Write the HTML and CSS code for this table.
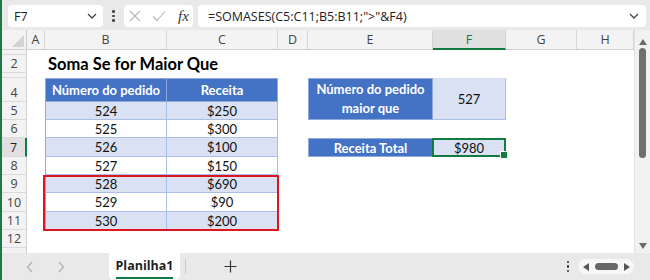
FILE: index.html
```html
<!DOCTYPE html>
<html lang="pt">
<head>
<meta charset="utf-8">
<title>Soma Se for Maior Que</title>
<link rel="stylesheet" href="styles.css">
</head>
<body>
<div class="app">
  <div class="toolbar">
    <div class="namebox">
      <span class="namebox-text">F7</span>
      <svg class="chev" width="10" height="6" viewBox="0 0 10 6"><path d="M1 1 L5 5 L9 1" fill="none" stroke="#444" stroke-width="1.3"/></svg>
    </div>
    <div class="kebab"><i></i><i></i><i></i></div>
    <div class="fxbox">
      <svg width="12" height="12" viewBox="0 0 12 12"><path d="M1 1 L11 11 M11 1 L1 11" stroke="#b5b5b5" stroke-width="1.1" fill="none"/></svg>
      <svg width="14" height="12" viewBox="0 0 14 12"><path d="M1 6.5 L5 10.5 L13 1.5" stroke="#b5b5b5" stroke-width="1.1" fill="none"/></svg>
      <span class="fx">fx</span>
    </div>
    <div class="formula">
      <span class="formula-text">=SOMASES(C5:C11;B5:B11;"&gt;"&amp;F4)</span>
      <svg class="chev" width="10" height="6" viewBox="0 0 10 6"><path d="M1 1 L5 5 L9 1" fill="none" stroke="#444" stroke-width="1.3"/></svg>
    </div>
  </div>

  <div class="main">
    <div class="sheet">
      <!-- column headers -->
      <div class="corner"><svg width="12" height="12" viewBox="0 0 12 12"><polygon points="12,0 12,12 0,12" fill="#d4d4d4"/></svg></div>
      <div class="colhdr">A</div>
      <div class="colhdr">B</div>
      <div class="colhdr">C</div>
      <div class="colhdr">D</div>
      <div class="colhdr">E</div>
      <div class="colhdr sel">F</div>
      <div class="colhdr">G</div>
      <div class="colhdr">H</div>

      <!-- row headers -->
      <div class="rowhdr r1"></div>
      <div class="rowhdr r2">2</div>
      <div class="rowhdr r3"></div>
      <div class="rowhdr r4">4</div>
      <div class="rowhdr r5">5</div>
      <div class="rowhdr r6">6</div>
      <div class="rowhdr r7 sel">7</div>
      <div class="rowhdr r8">8</div>
      <div class="rowhdr r9">9</div>
      <div class="rowhdr r10">10</div>
      <div class="rowhdr r11">11</div>
      <div class="rowhdr r12">12</div>
      <div class="rowhdr r13"></div>

      <!-- title -->
      <div class="title">Soma Se for Maior Que</div>

      <!-- left table -->
      <div class="cell th cB r4 first">Número do pedido</div>
      <div class="cell th cC r4">Receita</div>

      <div class="cell td alt cB r5 first">524</div><div class="cell td alt cC r5">$250</div>
      <div class="cell td cB r6 first">525</div><div class="cell td cC r6">$300</div>
      <div class="cell td alt cB r7 first">526</div><div class="cell td alt cC r7">$100</div>
      <div class="cell td cB r8 first">527</div><div class="cell td cC r8">$150</div>
      <div class="cell td alt cB r9 first">528</div><div class="cell td alt cC r9">$690</div>
      <div class="cell td cB r10 first">529</div><div class="cell td cC r10">$90</div>
      <div class="cell td alt cB r11 first">530</div><div class="cell td alt cC r11">$200</div>

      <!-- right table -->
      <div class="cell th wrap cE r45 first">Número do pedido<br>maior que</div>
      <div class="cell td alt cF r45">527</div>
      <div class="cell th cE r7 first top">Receita Total</div>
      <div class="cell td alt cF r7 top">$980</div>

      <!-- overlays -->
      <div class="redbox"></div>
      <div class="selection"></div>
    </div>
    <div class="vscroll">
      <svg class="vs-up" width="8" height="6" viewBox="0 0 8 6"><polygon points="4,0 8,6 0,6" fill="#6b6b6b"/></svg>
      <div class="vs-thumb"></div>
      <svg class="vs-down" width="8" height="6" viewBox="0 0 8 6"><polygon points="0,0 8,0 4,6" fill="#6b6b6b"/></svg>
    </div>
  </div>

  <div class="tabbar">
    <div class="tabnav">
      <svg width="8" height="12" viewBox="0 0 8 12"><path d="M6 1 L1.5 6 L6 11" fill="none" stroke="#b0b0b0" stroke-width="1.2"/></svg>
      <svg width="8" height="12" viewBox="0 0 8 12"><path d="M2 1 L6.5 6 L2 11" fill="none" stroke="#b0b0b0" stroke-width="1.2"/></svg>
    </div>
    <div class="tab"><span class="tab-label">Planilha1</span></div>
    <div class="tabsep"></div>
    <div class="addsheet">
      <svg width="13" height="13" viewBox="0 0 13 13"><path d="M6.5 0.5 V12.5 M0.5 6.5 H12.5" stroke="#333" stroke-width="1.2"/></svg>
    </div>
    <div class="spacer"></div>
    <div class="kebab small"><i></i><i></i><i></i></div>
    <div class="hscroll">
      <svg width="6" height="8" viewBox="0 0 6 8"><polygon points="0,4 6,0 6,8" fill="#555"/></svg>
      <div class="hs-thumb"></div>
      <svg width="6" height="8" viewBox="0 0 6 8"><polygon points="0,0 6,4 0,8" fill="#555"/></svg>
    </div>
  </div>
</div>
</body>
</html>
```

FILE: styles.css
```css
* { box-sizing: border-box; }

html, body {
  margin: 0;
  padding: 0;
  background: #ffffff;
}

.app {
  width: 650px;
  height: 280px;
  overflow: hidden;
  border-left: 2px solid #1d7a45;
  display: flex;
  flex-direction: column;
  font-family: "Open Sans", "Noto Sans", sans-serif;
}

/* ---------- toolbar ---------- */
.toolbar {
  height: 30px;
  flex: none;
  background: #e9e9e9;
  display: flex;
  align-items: flex-start;
  padding: 5px 4px 0 6px;
}

.namebox {
  width: 95px;
  height: 22px;
  background: #fff;
  border-radius: 4px;
  display: flex;
  align-items: center;
  justify-content: space-between;
  padding: 0 6px 0 6px;
}

.namebox-text {
  font-size: 12.5px;
  color: #222;
}

.kebab {
  width: 21px;
  height: 22px;
  display: flex;
  flex-direction: column;
  align-items: center;
  justify-content: center;
  gap: 2px;
}

.kebab i {
  display: block;
  width: 2.5px;
  height: 2.5px;
  border-radius: 50%;
  background: #444;
}

.fxbox {
  width: 69px;
  height: 22px;
  background: #fff;
  border-radius: 4px;
  display: flex;
  align-items: center;
  gap: 11px;
  padding-left: 5px;
}

.fx {
  font-family: "Liberation Serif", "DejaVu Serif", serif;
  font-style: italic;
  font-size: 15px;
  color: #333;
  margin-left: 1px;
}

.formula {
  flex: 1;
  margin-left: 5px;
  height: 22px;
  background: #fff;
  border-radius: 4px;
  display: flex;
  align-items: center;
  justify-content: space-between;
  padding: 0 7px 0 10px;
}

.formula-text {
  font-size: 12.5px;
  color: #222;
}

/* ---------- sheet ---------- */
.main {
  flex: 1;
  display: flex;
  min-height: 0;
}

.sheet {
  width: 632px;
  display: grid;
  grid-template-columns: 25px 18px 122px 111px 30px 125px 73px 71px 57px;
  grid-template-rows: 20px 5px 18px 5px 24px 18px 18px 19px 18px 18px 19px 18px 18px 5px;
  background: #fff;
  font-family: "Lato", "Liberation Sans", sans-serif;
}

.corner {
  grid-column: 1;
  grid-row: 1;
  background: #f3f3f3;
  border-right: 1px solid #cfcfcf;
  border-bottom: 1px solid #cfcfcf;
  display: flex;
  align-items: flex-end;
  justify-content: flex-end;
  padding: 0 2px 2px 0;
}

.colhdr {
  grid-row: 1;
  background: #f3f3f3;
  border-right: 1px solid #d6d6d6;
  border-bottom: 1px solid #cfcfcf;
  font-family: "Open Sans", "Noto Sans", sans-serif;
  font-size: 12.5px;
  color: #444;
  display: flex;
  align-items: center;
  justify-content: center;
}

.colhdr.sel {
  background: #e0e0e0;
  color: #107c41;
  border-bottom: 2px solid #107c41;
}

.rowhdr {
  grid-column: 1;
  background: #f3f3f3;
  border-right: 1px solid #cfcfcf;
  border-bottom: 1px solid #dadada;
  font-family: "Open Sans", "Noto Sans", sans-serif;
  font-size: 12.5px;
  line-height: 15px;
  color: #444;
  display: flex;
  align-items: flex-end;
  justify-content: center;
  padding-bottom: 1px;
}

.rowhdr.sel {
  background: #e0e0e0;
  border-right: 2px solid #107c41;
  color: #1f1f1f;
}

.rowhdr.r13 { border-bottom: none; }

.r1 { grid-row: 2; }
.r2 { grid-row: 3; }
.r3 { grid-row: 4; }
.r4 { grid-row: 5; }
.r5 { grid-row: 6; }
.r6 { grid-row: 7; }
.r7 { grid-row: 8; }
.r8 { grid-row: 9; }
.r9 { grid-row: 10; }
.r10 { grid-row: 11; }
.r11 { grid-row: 12; }
.r12 { grid-row: 13; }
.r13 { grid-row: 14; }
.r45 { grid-row: 5 / span 2; }

.cB { grid-column: 3; }
.cC { grid-column: 4; }
.cE { grid-column: 6; }
.cF { grid-column: 7; }

.title {
  grid-column: 3 / span 3;
  grid-row: 3;
  font-weight: 700;
  font-size: 16.5px;
  line-height: 18px;
  color: #000;
  padding-left: 3px;
  align-self: end;
  white-space: nowrap;
}

.cell {
  display: flex;
  align-items: center;
  justify-content: center;
  font-size: 13px;
  color: #111;
  border-right: 1px solid #a9bfe6;
  border-bottom: 1px solid #a9bfe6;
  white-space: nowrap;
  text-align: center;
}

.cell.first { border-left: 1px solid #8eaadb; }
.cell.th {
  background: #4472c4;
  color: #fff;
  font-weight: 700;
  border-top: 1px solid #8eaadb;
  border-right-color: #8eaadb;
  border-bottom-color: #8eaadb;
}
.cell.top { border-top: 1px solid #8eaadb; }
.cell.td { background: #fff; }
.cell.td.alt { background: #d9e1f2; }
.cell.wrap { line-height: 19px; }

/* overlays */
.redbox {
  grid-column: 3 / span 2;
  grid-row: 10 / span 3;
  border: 2px solid #e0141e;
  margin: 0 -1px -1px -2px;
  position: relative;
}

.selection {
  grid-column: 7;
  grid-row: 8;
  border: 2px solid #107c41;
  margin: 0 0 0 -1px;
  position: relative;
}

.selection::after {
  content: "";
  position: absolute;
  right: -4px;
  bottom: -4px;
  width: 6px;
  height: 6px;
  background: #107c41;
  border: 1px solid #fff;
}

/* vertical scrollbar */
.vscroll {
  width: 16px;
  background: #f1f1f1;
  border-left: 1px solid #e2e2e2;
  display: flex;
  flex-direction: column;
  align-items: center;
  padding: 9px 0 4px 0;
}

.vs-up { flex: none; }
.vs-thumb {
  width: 7px;
  height: 110px;
  margin-top: 3px;
  background: #6f6f6f;
  border-radius: 4px;
}
.vs-down { margin-top: auto; }

/* ---------- tab bar ---------- */
.tabbar {
  height: 27px;
  flex: none;
  background: #e9e9e9;
  display: flex;
  align-items: stretch;
  font-family: "Open Sans", "Noto Sans", sans-serif;
}

.tabnav {
  width: 107px;
  display: flex;
  align-items: center;
  gap: 23px;
  padding-left: 24px;
}

.tab {
  width: 71px;
  background: #fff;
  border-radius: 0 0 5px 5px;
  display: flex;
  justify-content: center;
  align-items: center;
  position: relative;
}

.tab-label {
  font-size: 12.5px;
  font-weight: 700;
  color: #1f1f1f;
  padding-bottom: 3px;
  border-bottom: 2.5px solid #107c41;
  line-height: 17px;
  margin-top: 2px;
}

.tabsep {
  width: 1px;
  background: #c9c9c9;
  margin: 6px 0 6px 5px;
}

.addsheet {
  width: 80px;
  display: flex;
  align-items: center;
  padding-left: 38px;
}

.spacer { flex: 1; }

.kebab.small {
  width: 10px;
  height: auto;
  gap: 2px;
  margin-right: 5px;
}
.kebab.small i { background: #333; }

.hscroll {
  width: 56px;
  height: 15px;
  align-self: center;
  margin-right: 16px;
  background: #f7f7f7;
  border-radius: 8px;
  display: flex;
  align-items: center;
  justify-content: space-between;
  padding: 0 4px 0 5px;
}

.hs-thumb {
  width: 23px;
  height: 7px;
  background: #666;
  border-radius: 4px;
}
```
